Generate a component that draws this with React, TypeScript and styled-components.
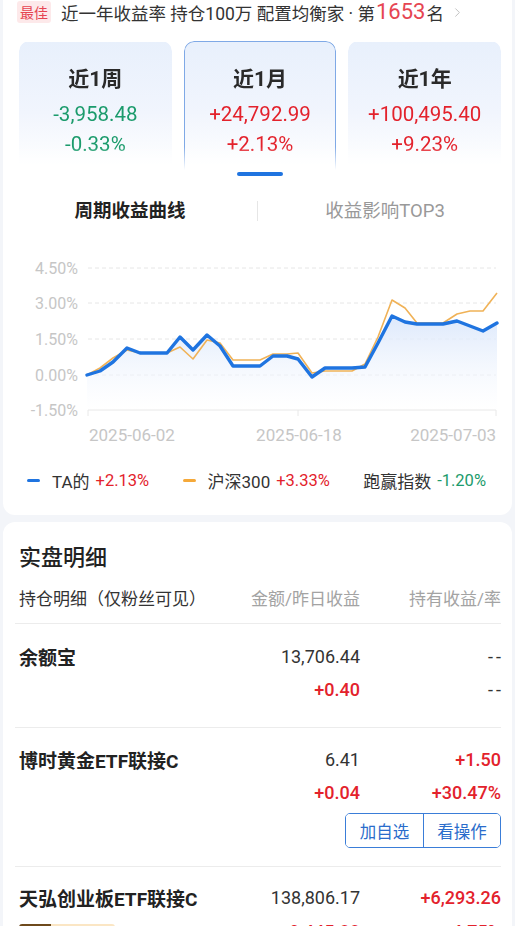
import React from "react";
import styled, { createGlobalStyle } from "styled-components";
import { ChevronRight } from "lucide-react";

const RED = "#e3222c";
const GREEN = "#1b9b6c";
const BLUE = "#1f74e0";

const Global = createGlobalStyle`
  html, body { margin: 0; padding: 0; background: #f3f5f9; }
  body {
    font-family: Roboto, "Noto Sans CJK SC", sans-serif;
    color: #333;
    -webkit-font-smoothing: antialiased;
  }
  * { box-sizing: border-box; }
`;

const Page = styled.div`
  width: 515px;
  overflow: hidden;
  height: 926px;
`;

const Card = styled.section`
  background: #fff;
  margin: 0 3px;
  padding: 0 11px 0 16px;
  border-radius: ${(p: { $top?: boolean }) => (p.$top ? "0 0 12px 12px" : "12px 12px 0 0")};
`;

const TopCard = styled(Card)`
  padding-bottom: 23px;
`;

const DetailCard = styled(Card)`
  margin-top: 7px;
  padding-top: 21px;
  padding-left: 12px;
`;

const RankLine = styled.div`
  display: flex;
  align-items: center;
  height: 24px;
  font-size: 17.5px;
  color: #333;
  white-space: nowrap;
`;

const Badge = styled.span`
  display: inline-flex;
  align-items: center;
  height: 22px;
  margin-left: -2px;
  margin-right: 10px;
  padding: 0 3px;
  border-radius: 3px;
  background: #fde9ea;
  color: #e64552;
  font-size: 14px;
`;

const RankNum = styled.span`
  color: #e64552;
  font-size: 22px;
  line-height: 24px;
  margin: 0 1px;
`;

const Chevron = styled.span`
  display: inline-flex;
  margin-left: 6px;
  color: #bdbdbd;
`;

const PeriodRow = styled.div`
  display: grid;
  grid-template-columns: repeat(3, 1fr);
  gap: 12px;
  margin-top: 17px;
`;

const PeriodCol = styled.div`
  display: flex;
  flex-direction: column;
  align-items: center;
`;

const PeriodCard = styled.div<{ $active?: boolean }>`
  width: 100%;
  height: 129px;
  padding-top: 24px;
  border-radius: 10px 10px 0 0;
  background: linear-gradient(180deg, #e8f0fc 0%, #f1f5fd 55%, #ffffff 100%);
  border: 1px solid ${(p) => (p.$active ? "#7fa9e6" : "transparent")};
  border-bottom: none;
  -webkit-mask-image: linear-gradient(180deg, #000 82%, transparent 100%);
  mask-image: linear-gradient(180deg, #000 82%, transparent 100%);
  display: flex;
  flex-direction: column;
  align-items: center;
`;

const PeriodTitle = styled.div`
  font-size: 21px;
  font-weight: 700;
  line-height: 26px;
  color: #2a2a2a;
`;

const PeriodValue = styled.div<{ $up: boolean }>`
  font-size: 20.5px;
  line-height: 30px;
  margin-top: 7px;
  color: ${(p) => (p.$up ? RED : GREEN)};
`;

const PeriodPct = styled(PeriodValue)`
  margin-top: 0;
`;

const Indicator = styled.div<{ $show: boolean }>`
  width: 46px;
  height: 4px;
  border-radius: 2px;
  margin-top: 2px;
  background: ${(p) => (p.$show ? BLUE : "transparent")};
`;

const Tabs = styled.div`
  display: grid;
  grid-template-columns: 1fr 1px 1fr;
  align-items: center;
  height: 40px;
  margin: 15px -11px 0 -16px;
`;

const Tab = styled.div<{ $active?: boolean }>`
  text-align: center;
  font-size: 18.5px;
  line-height: 24px;
  font-weight: ${(p) => (p.$active ? 700 : 400)};
  color: ${(p) => (p.$active ? "#222" : "#999")};
`;

const TabDivider = styled.div`
  height: 20px;
  background: #e6e6e6;
`;

const ChartWrap = styled.div`
  margin: 21px -11px 0 -16px;
  height: 198px;
  svg { display: block; }
`;

const Legend = styled.div`
  display: flex;
  justify-content: space-between;
  align-items: center;
  height: 24px;
  margin-top: 18px;
  padding: 0 15px 0 8px;
`;

const LegendItem = styled.div`
  display: flex;
  align-items: center;
  font-size: 17px;
  color: #333;
  white-space: nowrap;
`;

const Dash = styled.span<{ $color: string }>`
  width: 13px;
  height: 3px;
  border-radius: 1.5px;
  background: ${(p) => p.$color};
  margin-right: 12px;
`;

const LegendVal = styled.span<{ $up: boolean }>`
  margin-left: 6px;
  font-size: 16.5px;
  color: ${(p) => (p.$up ? RED : GREEN)};
`;

const SectionTitle = styled.div`
  font-size: 22px;
  font-weight: 500;
  line-height: 30px;
  padding-left: 4px;
  color: #222;
`;

const Grid = styled.div`
  display: grid;
  grid-template-columns: 1fr 150px 141px;
  align-items: center;
`;

const HeaderRow = styled(Grid)`
  margin-top: 14px;
  padding: 0 0 12px 4px;
  border-bottom: 1px solid #ececec;
  line-height: 24px;
  font-size: 17px;
`;

const HeadCell = styled.div<{ $muted?: boolean }>`
  color: ${(p) => (p.$muted ? "#a3a3a3" : "#333")};
  text-align: ${(p) => (p.$muted ? "right" : "left")};
  white-space: nowrap;
`;

const HoldingRow = styled.div<{ $pt?: number }>`
  padding: ${(p) => p.$pt ?? 18}px 0 18px 4px;
  border-bottom: 1px solid #ececec;
`;

const Line = styled(Grid)<{ $gap?: number }>`
  height: 24px;
  margin-top: ${(p) => p.$gap ?? 0}px;
`;

const Name = styled.div`
  font-size: 19px;
  font-weight: 700;
  color: #222;
  white-space: nowrap;
`;

const Num = styled.div<{ $tone?: "up" | "plain" }>`
  text-align: right;
  font-size: 18px;
  white-space: nowrap;
  color: ${(p) => (p.$tone === "up" ? RED : "#333")};
  font-weight: ${(p) => (p.$tone === "up" ? 500 : 400)};
`;

const Dashes = styled(Num)`
  letter-spacing: 3px;
  margin-right: -3px;
`;

const Actions = styled.div`
  display: flex;
  justify-content: flex-end;
  margin-top: 9px;
`;

const ActionGroup = styled.div`
  display: flex;
  height: 35px;
  border: 1px solid #3a7dd8;
  border-radius: 5px;
  overflow: hidden;
`;

const ActionBtn = styled.button`
  width: 77px;
  height: 100%;
  border: none;
  background: #fff;
  color: #2a6ccb;
  font-family: "Noto Sans CJK SC", sans-serif;
  font-size: 16.5px;
  padding: 0;
  & + & { border-left: 1px solid #3a7dd8; }
`;

const TagWrap = styled.div`
  display: flex;
  align-items: center;
  font-size: 13px;
  padding-top: 6px;
`;

const TagDark = styled.span`
  background: #6e4a1c;
  color: #f6d9a3;
  padding: 0 3px;
  border-radius: 3px 0 0 3px;
  line-height: 20px;
`;

const TagLight = styled.span`
  background: #fbe6c4;
  color: #7a5220;
  padding: 0 6px;
  border-radius: 0 3px 3px 0;
  line-height: 20px;
`;

const bluePts: [number, number][] = [
  [87, 375], [100, 371], [113, 362], [127, 348], [140, 353], [167, 353], [180, 337],
  [193, 350], [207, 335], [220, 346], [233, 366], [260, 366], [273, 356], [287, 356],
  [298, 359], [312, 377], [325, 368], [338, 368], [352, 368], [365, 367], [378, 343],
  [392, 316], [405, 322], [417, 324], [443, 324], [457, 321], [470, 326], [483, 331],
  [497, 323],
];

const orangePts: [number, number][] = [
  [87, 375], [100, 368], [113, 358], [127, 350], [140, 353], [167, 353], [180, 347],
  [193, 359], [207, 340], [220, 343], [233, 360], [260, 360], [273, 354], [287, 354],
  [298, 353], [312, 373], [325, 371], [352, 371], [365, 364], [378, 337], [392, 300],
  [405, 308], [417, 323], [443, 323], [457, 314], [470, 311], [483, 311], [497, 293],
];

const toPts = (a: [number, number][]) => a.map((p) => p.join(",")).join(" ");

function Chart() {
  const yTicks = [
    { y: 268, t: "4.50%" },
    { y: 303, t: "3.00%" },
    { y: 339, t: "1.50%" },
    { y: 375, t: "0.00%" },
    { y: 410, t: "-1.50%" },
  ];
  const area =
    "M" + bluePts.map((p) => p.join(",")).join(" L") + " L497,410 L87,410 Z";
  return (
    <svg width="100%" height="198" viewBox="3 252 509 198">
      <defs>
        <linearGradient id="fill" x1="0" y1="0" x2="0" y2="1">
          <stop offset="0%" stopColor="#d9e6fb" stopOpacity="0.9" />
          <stop offset="100%" stopColor="#ffffff" stopOpacity="0.4" />
        </linearGradient>
      </defs>
      {yTicks.map((t, i) => (
        <g key={t.t}>
          {i < 4 && (
            <line x1="88" x2="496" y1={t.y} y2={t.y} stroke="#e6e6e6" strokeWidth="1" strokeDasharray="4 3" />
          )}
          <text x="78" y={t.y + 5.5} textAnchor="end" fontSize="16" fill="#c6c6c6" fontFamily="Roboto, sans-serif">
            {t.t}
          </text>
        </g>
      ))}
      <path d={area} fill="url(#fill)" />
      <line x1="88" x2="496" y1="410" y2="410" stroke="#e8e8e8" strokeWidth="1" />
      <line x1="88" x2="88" y1="410" y2="416" stroke="#e8e8e8" />
      <line x1="298" x2="298" y1="410" y2="416" stroke="#e8e8e8" />
      <line x1="496" x2="496" y1="410" y2="416" stroke="#e8e8e8" />
      <polyline points={toPts(orangePts)} fill="none" stroke="#f0b257" strokeWidth="1.6" strokeLinejoin="round" />
      <polyline points={toPts(bluePts)} fill="none" stroke={BLUE} strokeWidth="3.4" strokeLinejoin="round" strokeLinecap="round" />
      <g fontSize="17" fill="#c6c6c6" fontFamily="Roboto, sans-serif">
        <text x="89" y="441">2025-06-02</text>
        <text x="299" y="441" textAnchor="middle">2025-06-18</text>
        <text x="496" y="441" textAnchor="end">2025-07-03</text>
      </g>
    </svg>
  );
}

const periods = [
  { title: "近1周", value: "-3,958.48", pct: "-0.33%", up: false, active: false },
  { title: "近1月", value: "+24,792.99", pct: "+2.13%", up: true, active: true },
  { title: "近1年", value: "+100,495.40", pct: "+9.23%", up: true, active: false },
];

export default function App() {
  return (
    <Page>
      <Global />
      <TopCard $top>
        <RankLine>
          <Badge>最佳</Badge>
          近一年收益率 持仓100万 配置均衡家 · 第<RankNum>1653</RankNum>名
          <Chevron>
            <ChevronRight size={15} strokeWidth={1.5} />
          </Chevron>
        </RankLine>

        <PeriodRow>
          {periods.map((p) => (
            <PeriodCol key={p.title}>
              <PeriodCard $active={p.active}>
                <PeriodTitle>{p.title}</PeriodTitle>
                <PeriodValue $up={p.up}>{p.value}</PeriodValue>
                <PeriodPct $up={p.up}>{p.pct}</PeriodPct>
              </PeriodCard>
              <Indicator $show={p.active} />
            </PeriodCol>
          ))}
        </PeriodRow>

        <Tabs>
          <Tab $active>周期收益曲线</Tab>
          <TabDivider />
          <Tab>收益影响TOP3</Tab>
        </Tabs>

        <ChartWrap>
          <Chart />
        </ChartWrap>

        <Legend>
          <LegendItem>
            <Dash $color={BLUE} />
            TA的<LegendVal $up>+2.13%</LegendVal>
          </LegendItem>
          <LegendItem>
            <Dash $color="#f5a93a" />
            沪深300<LegendVal $up>+3.33%</LegendVal>
          </LegendItem>
          <LegendItem>
            跑赢指数<LegendVal $up={false}>-1.20%</LegendVal>
          </LegendItem>
        </Legend>
      </TopCard>

      <DetailCard>
        <SectionTitle>实盘明细</SectionTitle>
        <HeaderRow>
          <HeadCell>持仓明细（仅粉丝可见）</HeadCell>
          <HeadCell $muted>金额/昨日收益</HeadCell>
          <HeadCell $muted>持有收益/率</HeadCell>
        </HeaderRow>

        <HoldingRow $pt={19}>
          <Line>
            <Name>余额宝</Name>
            <Num>13,706.44</Num>
            <Dashes>--</Dashes>
          </Line>
          <Line $gap={10}>
            <div />
            <Num $tone="up">+0.40</Num>
            <Dashes>--</Dashes>
          </Line>
          <div style={{ height: 8 }} />
        </HoldingRow>

        <HoldingRow>
          <Line>
            <Name>博时黄金ETF联接C</Name>
            <Num>6.41</Num>
            <Num $tone="up">+1.50</Num>
          </Line>
          <Line $gap={10}>
            <div />
            <Num $tone="up">+0.04</Num>
            <Num $tone="up">+30.47%</Num>
          </Line>
          <Actions>
            <ActionGroup>
              <ActionBtn>加自选</ActionBtn>
              <ActionBtn>看操作</ActionBtn>
            </ActionGroup>
          </Actions>
        </HoldingRow>

        <HoldingRow $pt={17}>
          <Line>
            <Name>天弘创业板ETF联接C</Name>
            <Num>138,806.17</Num>
            <Num $tone="up">+6,293.26</Num>
          </Line>
          <Line $gap={10}>
            <TagWrap>
              <TagDark>持有</TagDark>
              <TagLight>超过三年</TagLight>
            </TagWrap>
            <Num $tone="up">+9,445.88</Num>
            <Num $tone="up">+4.75%</Num>
          </Line>
        </HoldingRow>
      </DetailCard>
    </Page>
  );
}
